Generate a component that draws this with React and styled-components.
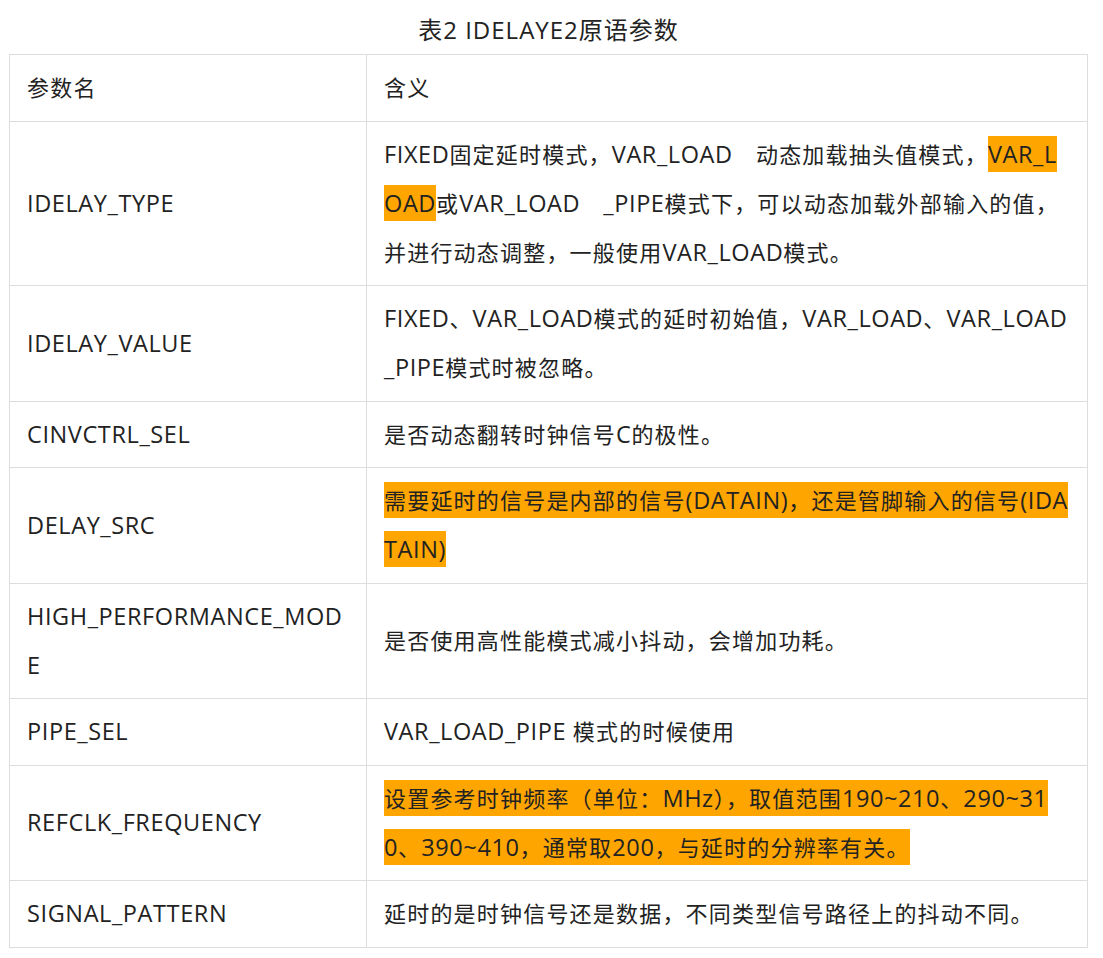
import React from "react";
import styled, { createGlobalStyle } from "styled-components";

const Global = createGlobalStyle`
  html, body { margin: 0; padding: 0; background: #fff; }
  body {
    font-family: "Open Sans", "Noto Sans CJK SC", sans-serif;
    color: #222;
  }
`;

const Page = styled.div`
  padding: 0 16px 0 9px;
  width: 1079px;
`;

const Title = styled.div`
  height: 54px;
  line-height: 60px;
  text-align: center;
  font-size: 24px;
  letter-spacing: 1px;
  color: #222;
`;

const Table = styled.table`
  width: 1079px;
  border-collapse: collapse;
  table-layout: fixed;
  font-size: 22px;
  letter-spacing: 1.2px;
`;

const Cell = styled.td`
  border: 1px solid #ddd;
  padding: 8.25px 15px 8.25px 17px;
  line-height: 49px;
  vertical-align: middle;
  word-break: break-all;
  text-align: left;
  color: #222;
  width: ${(p) => (p.$first ? "324px" : "auto")};
`;

const Mark = styled.span`
  background: #ffa500;
  color: #222;
  padding: 3px 0;
`;

const Latin = styled.span`
  font-size: 23.5px;
  letter-spacing: 0.6px;
  line-height: 1;
`;

function Runs({ text }) {
  const parts = text.match(/[\x20-\x7E]+|[^\x20-\x7E]+/g) || [];
  return parts.map((p, i) =>
    /^[\x20-\x7E]+$/.test(p) ? <Latin key={i}>{p}</Latin> : <React.Fragment key={i}>{p}</React.Fragment>
  );
}

function Content({ segs }) {
  return segs.map((s, i) =>
    typeof s === "string" ? (
      <Runs key={i} text={s} />
    ) : (
      <Mark key={i}>
        <Runs text={s.mark} />
      </Mark>
    )
  );
}

const rows = [
  ["参数名", ["含义"]],
  [
    "IDELAY_TYPE",
    [
      "FIXED固定延时模式，VAR_LOAD\u3000动态加载抽头值模式，",
      { mark: "VAR_LOAD" },
      "或VAR_LOAD\u3000_PIPE模式下，可以动态加载外部输入的值，并进行动态调整，一般使用VAR_LOAD模式。",
    ],
  ],
  ["IDELAY_VALUE", ["FIXED、VAR_LOAD模式的延时初始值，VAR_LOAD、VAR_LOAD_PIPE模式时被忽略。"]],
  ["CINVCTRL_SEL", ["是否动态翻转时钟信号C的极性。"]],
  ["DELAY_SRC", [{ mark: "需要延时的信号是内部的信号(DATAIN)，还是管脚输入的信号(IDATAIN)" }]],
  ["HIGH_PERFORMANCE_MODE", ["是否使用高性能模式减小抖动，会增加功耗。"]],
  ["PIPE_SEL", ["VAR_LOAD_PIPE 模式的时候使用"]],
  [
    "REFCLK_FREQUENCY",
    [{ mark: "设置参考时钟频率（单位：MHz），取值范围190~210、290~310、390~410，通常取200，与延时的分辨率有关。" }],
  ],
  ["SIGNAL_PATTERN", ["延时的是时钟信号还是数据，不同类型信号路径上的抖动不同。"]],
];

export default function App() {
  return (
    <Page>
      <Global />
      <Title>表2 IDELAYE2原语参数</Title>
      <Table>
        <tbody>
          {rows.map((r, i) => (
            <tr key={i}>
              <Cell $first>
                <Runs text={r[0]} />
              </Cell>
              <Cell>
                <Content segs={r[1]} />
              </Cell>
            </tr>
          ))}
        </tbody>
      </Table>
    </Page>
  );
}
